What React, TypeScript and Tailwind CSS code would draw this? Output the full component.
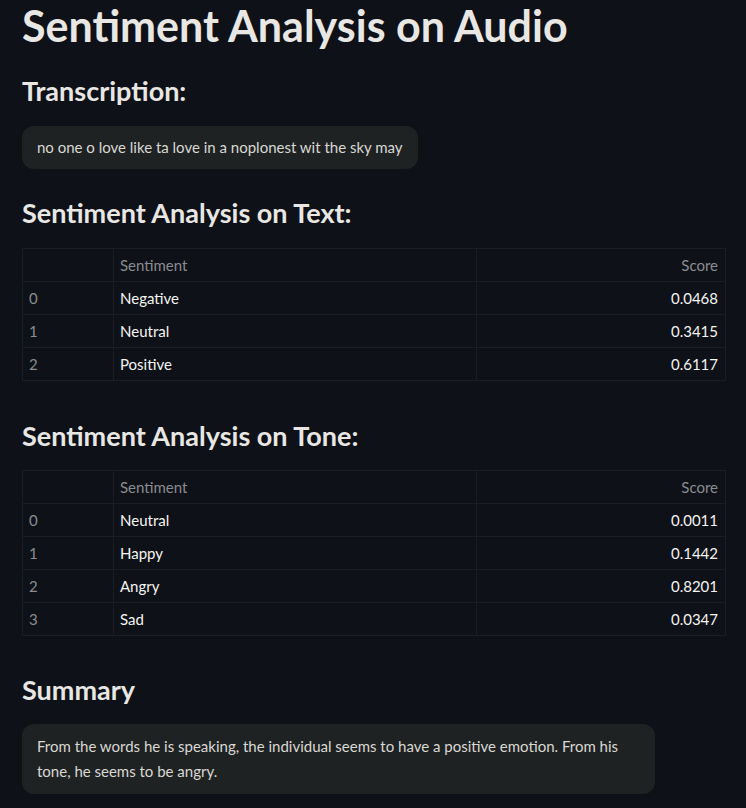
const textRows = [
  { idx: 0, sentiment: "Negative", score: "0.0468" },
  { idx: 1, sentiment: "Neutral", score: "0.3415" },
  { idx: 2, sentiment: "Positive", score: "0.6117" },
];

const toneRows = [
  { idx: 0, sentiment: "Neutral", score: "0.0011" },
  { idx: 1, sentiment: "Happy", score: "0.1442" },
  { idx: 2, sentiment: "Angry", score: "0.8201" },
  { idx: 3, sentiment: "Sad", score: "0.0347" },
];

type Row = { idx: number; sentiment: string; score: string };

function ResultTable({ rows }: { rows: Row[] }) {
  return (
    <table className="w-full border-collapse text-[15px] border border-[#1a1d24]">
      <thead>
        <tr className="h-[33px] text-[#8a8c91]">
          <th className="w-[91px] border border-[#1a1d24]"></th>
          <th className="w-[363px] border border-[#1a1d24] text-left font-normal px-[6px]">
            Sentiment
          </th>
          <th className="border border-[#1a1d24] text-right font-normal px-[7px]">
            Score
          </th>
        </tr>
      </thead>
      <tbody>
        {rows.map((r) => (
          <tr key={r.idx} className="h-[33px]">
            <td className="border border-[#1a1d24] px-[6px] text-[#8a8c91]">
              {r.idx}
            </td>
            <td className="border border-[#1a1d24] px-[6px] text-[#f4f4f2]">
              {r.sentiment}
            </td>
            <td className="border border-[#1a1d24] px-[7px] text-right text-[#f4f4f2]">
              {r.score}
            </td>
          </tr>
        ))}
      </tbody>
    </table>
  );
}

export default function App() {
  return (
    <div className="min-h-screen bg-[#0e1117] text-[#e8e7e3] font-['Lato',sans-serif] pl-[22px] pr-[20px] pt-[1px]">
      <h1 className="text-[43px] font-bold leading-[50px]">Sentiment Analysis on Audio</h1>

      <h3 className="mt-[23px] text-[27px] font-bold leading-[34px]">Transcription:</h3>
      <div className="mt-[18px] inline-block rounded-[12px] bg-[#1f2223] px-[15px] py-[11px] text-[15px] leading-[21px] text-[#d9d8d3]">
        no one o love like ta love in a noplonest wit the sky may
      </div>

      <h3 className="mt-[27px] text-[27px] font-bold leading-[34px]">
        Sentiment Analysis on Text:
      </h3>
      <div className="mt-[18px]">
        <ResultTable rows={textRows} />
      </div>

      <h3 className="mt-[38px] text-[27px] font-bold leading-[34px]">
        Sentiment Analysis on Tone:
      </h3>
      <div className="mt-[17px]">
        <ResultTable rows={toneRows} />
      </div>

      <h3 className="mt-[37px] text-[27px] font-bold leading-[34px]">Summary</h3>
      <div className="mt-[17px] w-[633px] rounded-[12px] bg-[#1f2223] px-[15px] py-[10px] text-[15px] leading-[25px] text-[#d9d8d3]">
        From the words he is speaking, the individual seems to have a positive emotion. From his
        tone, he seems to be angry.
      </div>
    </div>
  );
}
